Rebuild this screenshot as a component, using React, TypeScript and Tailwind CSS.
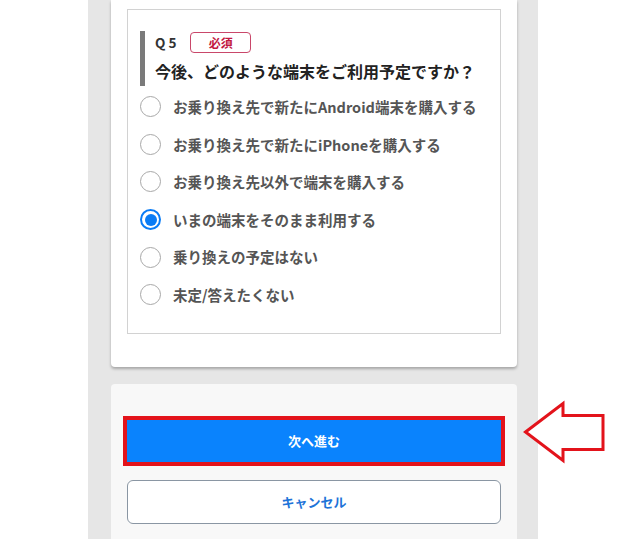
import React from 'react';

const OPTIONS = [
  'お乗り換え先で新たにAndroid端末を購入する',
  'お乗り換え先で新たにiPhoneを購入する',
  'お乗り換え先以外で端末を購入する',
  'いまの端末をそのまま利用する',
  '乗り換えの予定はない',
  '未定/答えたくない',
];

const SELECTED = 3;

export default function App() {
  return (
    <div
      className="relative h-[539px] w-[640px] overflow-hidden bg-white"
      style={{ fontFamily: '"Noto Sans CJK JP", "Noto Sans", sans-serif' }}
    >
      <div className="ml-[88px] flex h-full w-[450px] flex-col bg-[#e6e6e6] pr-[21px] pl-[23px]">
        {/* question card */}
        <div className="rounded-b-[4px] bg-white px-[16px] pt-[9px] pb-[33px] shadow-[0_2px_3px_rgba(0,0,0,0.28)]">
          <div className="border border-[#d2d2d2] px-[12px] pt-[21px] pb-[19px]">
            <div className="flex">
              <div className="w-[5px] shrink-0 bg-[#7a7a7a]" />
              <div className="ml-[10px] pb-[4px]">
                <div className="flex h-[23px] items-center">
                  <span className="text-[13.5px] font-bold tracking-[3px] text-[#333]">Q5</span>
                  <span className="ml-[11px] flex h-[21px] w-[61px] items-center justify-center rounded-[4px] border border-[#c9476a] text-[12px] font-bold text-[#c2163f]">
                    必須
                  </span>
                </div>
                <p className="mt-[6px] text-[16px] leading-[22px] font-bold text-[#222]">
                  今後、どのような端末をご利用予定ですか？
                </p>
              </div>
            </div>
            <ul className="mt-[2px]">
              {OPTIONS.map((label, i) => (
                <li key={label} className="flex h-[37.6px] items-center">
                  {i === SELECTED ? (
                    <span className="flex h-[21px] w-[21px] items-center justify-center rounded-full border-2 border-[#0a7cf5] bg-white">
                      <span className="h-[12px] w-[12px] rounded-full bg-[#0a7cf5]" />
                    </span>
                  ) : (
                    <span className="h-[21px] w-[21px] rounded-full border border-[#a8a8a8] bg-white" />
                  )}
                  <span className="ml-[12px] text-[14.5px] font-bold text-[#555]">{label}</span>
                </li>
              ))}
            </ul>
          </div>
        </div>

        {/* action card */}
        <div className="mt-[17px] flex-1 rounded-t-[4px] bg-[#f8f8f8] px-[16px] pt-[36px]">
          <button className="flex h-[42px] w-full items-center justify-center bg-[#0a83fd] text-[13px] font-bold text-white outline-4 outline-[#e3131b]">
            次へ進む
          </button>
          <button className="mt-[18px] flex h-[44px] w-full items-center justify-center rounded-[6px] border border-[#8a96a3] bg-white text-[13px] font-bold text-[#1e73d8]">
            キャンセル
          </button>
        </div>
      </div>

      {/* annotation arrow */}
      <svg className="absolute top-[400px] left-[522px]" width="86" height="64" viewBox="0 0 86 64">
        <path
          d="M3.5 32 L41 3.5 L41 15.5 L81 15.5 L81 49.5 L41 49.5 L41 60.5 Z"
          fill="white"
          stroke="#e3131b"
          strokeWidth="3"
          strokeLinejoin="miter"
        />
      </svg>
    </div>
  );
}
